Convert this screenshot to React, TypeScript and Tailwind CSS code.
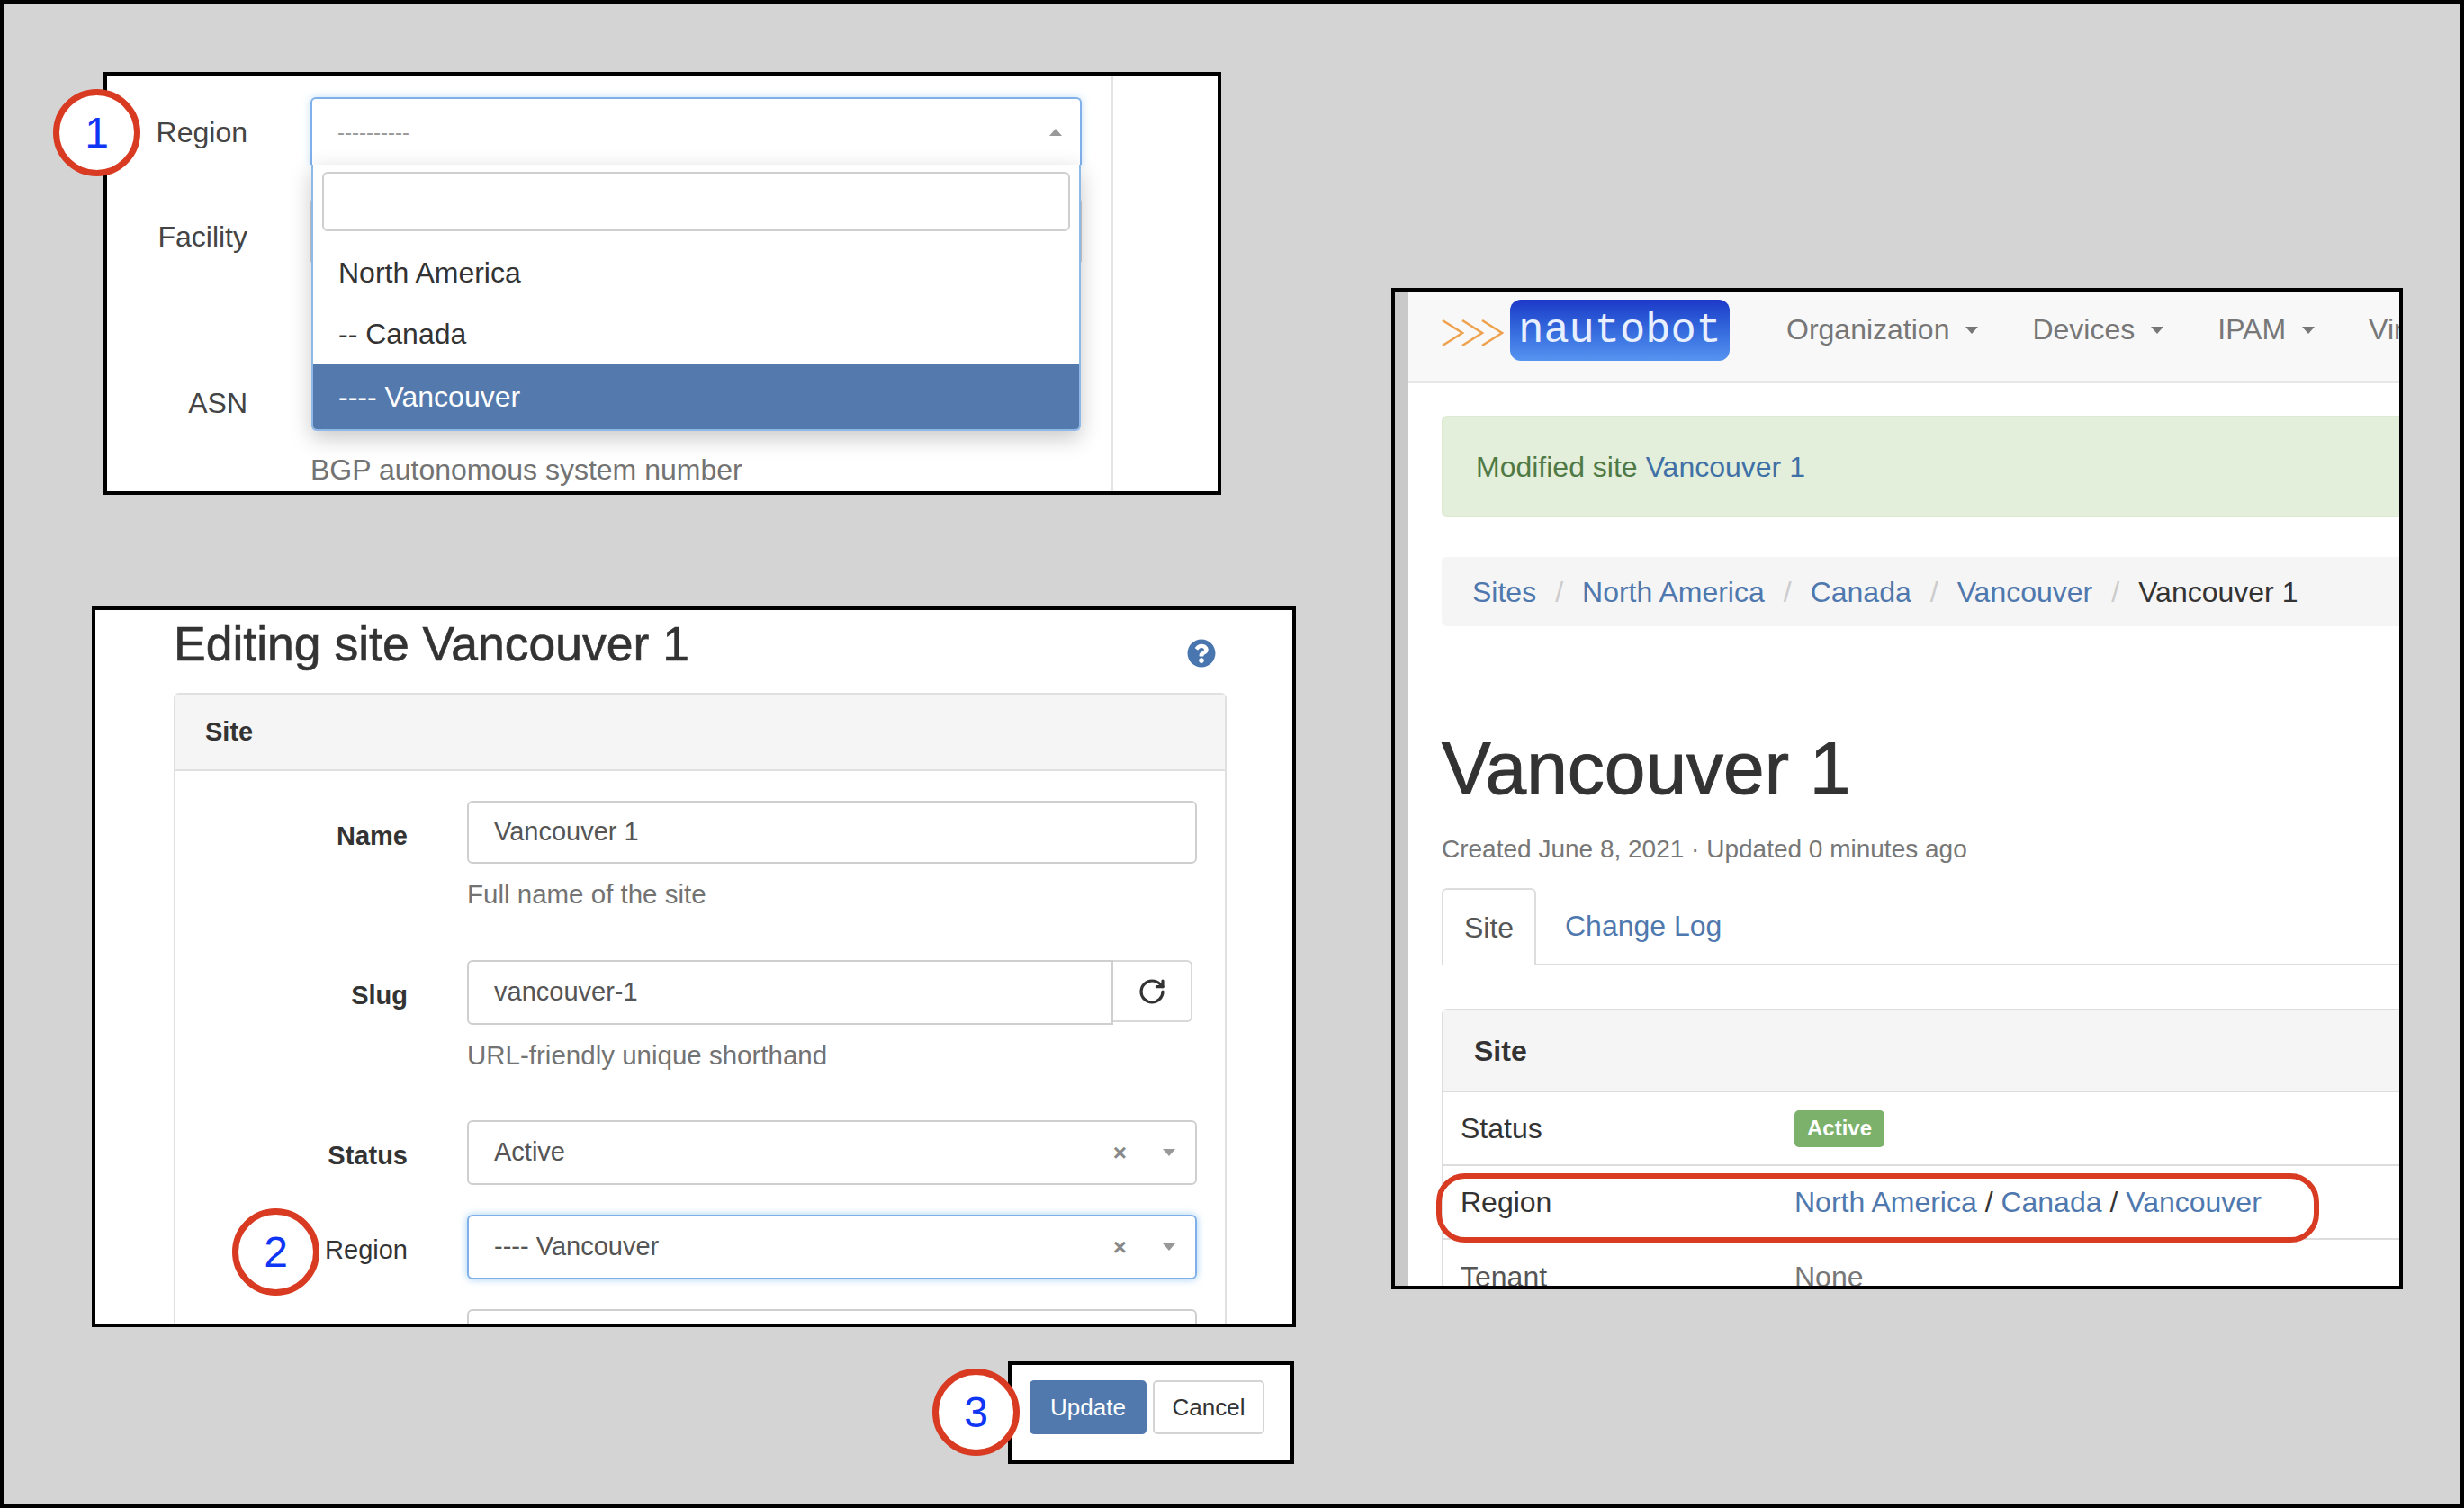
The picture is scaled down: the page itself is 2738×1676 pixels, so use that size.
import React from 'react';
import { RotateCw } from 'lucide-react';
import { FaQuestionCircle } from 'react-icons/fa';

const Caret = ({ up = false, className = '' }: { up?: boolean; className?: string }) => (
  <svg width="14" height="8" viewBox="0 0 14 8" className={className}>
    <polygon points={up ? '0,8 14,8 7,0' : '0,0 14,0 7,8'} fill="currentColor" />
  </svg>
);

// numbered red ring laid over the screenshots
const Callout = ({ n, className }: { n: number; className: string }) => (
  <div className={`absolute z-20 w-[97px] h-[97px] rounded-full bg-white border-[7px] border-[#d83a22] flex items-center justify-center text-[48px] text-[#0f35f5] ${className}`}>
    {n}
  </div>
);

const Field = ({ label, bold = true, children, help, className = '' }: { label: string; bold?: boolean; children: React.ReactNode; help?: string; className?: string }) => (
  <div className={`flex ${className}`}>
    <div className={`w-[258px] shrink-0 text-right text-[29px] pt-[18px] ${bold ? 'font-bold text-[#333]' : 'text-[#333]'}`}>{label}</div>
    <div className="ml-[66px] w-[811px] shrink-0">
      {children}
      {help && <div className="mt-[16px] h-[36px] leading-[36px] text-[29.5px] text-[#737373]">{help}</div>}
    </div>
  </div>
);

const SelectBox = ({ value, focused = false }: { value: string; focused?: boolean }) => (
  <div className={`h-[72px] rounded-[6px] border-2 pl-[28px] pr-[22px] flex items-center text-[29px] text-[#555] ${focused ? 'border-[#7fb0ea] shadow-[0_0_8px_rgba(102,175,233,0.6)]' : 'border-[#cfcfcf]'}`}>
    <span className="flex-1">{value}</span>
    <span className="text-[26px] font-bold text-[#888] mr-[40px]">×</span>
    <Caret className="text-[#999]" />
  </div>
);

function RegionDropdown() {
  return (
    <div className="relative w-[1242px] h-[470px] shrink-0 ml-[111px] border-4 border-black bg-white">
      <Callout n={1} className="left-[-60px] top-[15px]" />
      <div className="h-full w-[1118px] border-r-2 border-[#e4e4e4] pt-[24px] text-[32px] text-[#444]">
        <div className="flex">
          <div className="w-[156px] shrink-0 text-right pt-[15px]">Region</div>
          <div className="relative ml-[70px] w-[857px] shrink-0 z-10">
            <div className="h-[75px] rounded-t-[6px] border-2 border-b-0 border-[#7fb0ea] pl-[28px] pr-[20px] flex items-center justify-between shadow-[0_0_10px_rgba(102,175,233,0.4)] text-[#999] text-[24px]">
              <span>----------</span>
              <Caret up className="text-[#999]" />
            </div>
            <div className="absolute left-[1px] top-[75px] w-[855px] bg-white border-x-2 border-b-2 border-[#8db8e8] rounded-b-[6px] shadow-[0_8px_24px_rgba(0,0,0,0.22)] text-[#333]">
              <div className="px-[10px] pt-[8px]">
                <div className="h-[66px] rounded-[6px] border-2 border-[#cfcfcf]" />
              </div>
              <div className="mt-[12px] h-[68px] pl-[28px] flex items-center">North America</div>
              <div className="h-[68px] pl-[28px] flex items-center">-- Canada</div>
              <div className="h-[72px] pl-[28px] flex items-center bg-[#5479ad] text-white rounded-b-[4px]">---- Vancouver</div>
            </div>
          </div>
        </div>
        <div className="flex mt-[36px]">
          <div className="w-[156px] shrink-0 text-right pt-[20px]">Facility</div>
          <div className="ml-[70px] w-[857px] h-[76px] border-2 border-[#cfcfcf] rounded-[6px]" />
        </div>
        <div className="flex mt-[111px]">
          <div className="w-[156px] shrink-0 text-right pt-[18px]">ASN</div>
          <div className="ml-[70px] w-[857px] h-[76px]" />
        </div>
        <div className="ml-[226px] mt-[16px] text-[#737373]">BGP autonomous system number</div>
      </div>
    </div>
  );
}

function EditForm() {
  return (
    <div className="relative w-[1338px] h-[801px] shrink-0 ml-[98px] mt-[124px] border-4 border-black bg-white">
      <Callout n={2} className="left-[152px] top-[665px]" />
      <div className="h-full overflow-hidden pl-[87px]">
        <div className="w-[1170px]">
          <div className="h-[92px] flex items-start justify-between text-[#333]">
            <h1 className="text-[53.5px] mt-[8px] leading-[60px] [-webkit-text-stroke:0.6px_#333]">Editing site Vancouver 1</h1>
            <FaQuestionCircle className="mr-[12px] mt-[32px] text-[#4a76b0]" size={32} />
          </div>
          <div className="border-2 border-[#e0e0e0] rounded-t-[6px]">
            <div className="h-[85px] bg-[#f5f5f5] border-b-2 border-[#e0e0e0] pl-[33px] flex items-center font-bold text-[29px] text-[#333]">Site</div>
            <div className="pt-[33px] pb-[40px]">
              <Field label="Name" help="Full name of the site">
                <div className="h-[70px] rounded-[6px] border-2 border-[#cfcfcf] pl-[28px] flex items-center text-[29px] text-[#555]">Vancouver 1</div>
              </Field>
              <Field label="Slug" className="mt-[55px]" help="URL-friendly unique shorthand">
                <div className="flex items-start">
                  <div className="w-[718px] h-[72px] rounded-l-[6px] border-2 border-[#cfcfcf] pl-[28px] flex items-center text-[29px] text-[#555]">vancouver-1</div>
                  <div className="w-[88px] h-[69px] rounded-r-[6px] border-2 border-l-0 border-[#d8d8d8] flex items-center justify-center text-[#333]">
                    <RotateCw size={32} strokeWidth={2.4} />
                  </div>
                </div>
              </Field>
              <Field label="Status" className="mt-[54px]">
                <SelectBox value="Active" />
              </Field>
              <Field label="Region" bold={false} className="mt-[33px]">
                <SelectBox value="---- Vancouver" focused />
              </Field>
              <Field label="" className="mt-[33px]">
                <div className="h-[70px] rounded-[6px] border-2 border-[#cfcfcf]" />
              </Field>
            </div>
          </div>
        </div>
      </div>
    </div>
  );
}

function SubmitButtons() {
  return (
    <div className="relative w-[318px] h-[114px] shrink-0 ml-[1116px] mt-[38px] border-4 border-black bg-white pl-[20px] pt-[17px] flex items-start gap-[7px] text-[26px]">
      <Callout n={3} className="left-[-88px] top-[4px]" />
      <div className="w-[130px] h-[60px] rounded-[5px] bg-[#5179ae] text-white flex items-center justify-center">Update</div>
      <div className="w-[124px] h-[60px] rounded-[5px] border-2 border-[#d4d4d4] text-[#333] flex items-center justify-center">Cancel</div>
    </div>
  );
}

const NAV = ['Organization', 'Devices', 'IPAM'];
const CRUMBS = ['Sites', 'North America', 'Canada', 'Vancouver'];

function SiteDetail() {
  return (
    <div className="relative w-[1124px] h-[1113px] shrink-0 ml-[102px] mt-[316px] border-4 border-black bg-white flex overflow-hidden text-[32px] text-[#333]">
      <div className="w-[15px] shrink-0 bg-[#c9c9c9]" />
      <div className="flex-1 overflow-hidden">
        <div className="w-[1300px]">
          <div className="h-[102px] bg-[#f8f8f8] border-b-2 border-[#e7e7e7] pl-[37px] flex items-start text-[#777]">
            <svg width="70" height="32" viewBox="0 0 70 32" className="mt-[30px] shrink-0" fill="none" stroke="#eea24e" strokeWidth="2.6">
              <polyline points="1,2 23,16 1,30" />
              <polyline points="23,2 45,16 23,30" />
              <polyline points="45,2 67,16 45,30" />
            </svg>
            <div className="ml-[6px] mt-[9px] w-[244px] h-[68px] shrink-0 rounded-[12px] bg-gradient-to-b from-[#1e38c8] to-[#5694f0] flex items-center justify-center font-['Liberation_Mono',monospace] text-[47px] leading-none text-[#e8f0ff]">
              nautobot
            </div>
            <div className="ml-[63px] mt-[18px] flex gap-[60px]">
              {NAV.map(n => (
                <div key={n} className="flex items-center">
                  {n}
                  <Caret className="ml-[18px] mt-[2px]" />
                </div>
              ))}
              <div>Virtualization</div>
            </div>
          </div>
          <div className="pl-[37px]">
            <div className="mt-[36px] h-[113px] bg-[#e3eedb] border-2 border-[#dde9d0] rounded-l-[6px] pl-[36px] flex items-center text-[#4f7a45]">
              Modified site<span className="ml-[9px] text-[#3f71a6]">Vancouver 1</span>
            </div>
            <div className="mt-[44px] h-[77px] bg-[#f5f5f5] rounded-l-[6px] pl-[34px] flex items-center">
              {CRUMBS.map(c => (
                <React.Fragment key={c}>
                  <span className="text-[#4f78ae]">{c}</span>
                  <span className="mx-[21px] text-[#ccc]">/</span>
                </React.Fragment>
              ))}
              <span className="text-[#333]">Vancouver 1</span>
            </div>
            <h1 className="mt-[108px] h-[100px] leading-[100px] text-[82px] [-webkit-text-stroke:1px_#333]">Vancouver 1</h1>
            <div className="mt-[24px] h-[32px] leading-[32px] text-[28px] text-[#777]">Created June 8, 2021 · Updated 0 minutes ago</div>
            <div className="mt-[27px] h-[86px] border-b-2 border-[#ddd] flex">
              <div className="w-[105px] h-[86px] border-2 border-b-0 border-[#ddd] rounded-t-[6px] bg-white flex items-center justify-center text-[#555]">Site</div>
              <div className="ml-[32px] flex items-center text-[#4f78ae]">Change Log</div>
            </div>
            <div className="mt-[48px] border-2 border-[#ddd] rounded-tl-[6px]">
              <div className="h-[91px] bg-[#f5f5f5] border-b-2 border-[#ddd] pl-[34px] flex items-center font-bold">Site</div>
              <div className="h-[82px] border-b-2 border-[#ddd] flex items-center pl-[19px]">
                <div className="w-[371px]">Status</div>
                <div className="w-[100px] h-[41px] rounded-[5px] bg-[#7bb16a] text-white font-bold text-[24px] flex items-center justify-center">Active</div>
              </div>
              <div className="h-[82px] border-b-2 border-[#ddd] flex items-center pl-[19px]">
                <div className="w-[371px]">Region</div>
                <div className="text-[#333]">
                  <span className="text-[#4f78ae]">North America</span> / <span className="text-[#4f78ae]">Canada</span> / <span className="text-[#4f78ae]">Vancouver</span>
                </div>
              </div>
              <div className="h-[82px] flex items-center pl-[19px] text-[#555]">
                <div className="w-[371px]">Tenant</div>
                <div className="text-[#777]">None</div>
              </div>
            </div>
          </div>
        </div>
      </div>
      {/* red highlight round the region row */}
      <div className="absolute left-[46px] top-[980px] w-[981px] h-[77px] rounded-[32px] border-[6px] border-[#d83a22]" />
    </div>
  );
}

export default function App() {
  return (
    <div className="w-[2738px] h-[1676px] box-border border-4 border-black bg-[#d4d4d4] flex overflow-hidden font-['Liberation_Sans',Arial,sans-serif]">
      <div className="w-[1440px] shrink-0 pt-[76px] flex flex-col">
        <RegionDropdown />
        <EditForm />
        <SubmitButtons />
      </div>
      <SiteDetail />
    </div>
  );
}
